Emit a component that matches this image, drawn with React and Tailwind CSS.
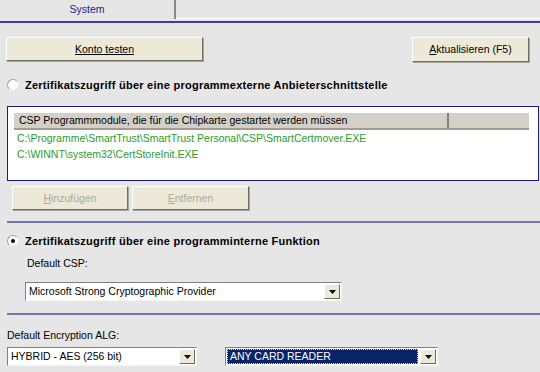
import React from "react";

function Button({ children, className = "", disabled = false }) {
  return (
    <div
      className={`flex items-center justify-center bg-[#ece9d8] border border-t-white border-l-white border-r-[#716f64] border-b-[#716f64] shadow-[1px_1px_0_#a8a69a] ${
        disabled ? "text-[#aca899]" : "text-black"
      } ${className}`}
    >
      {children}
    </div>
  );
}

function Radio({ checked }) {
  return (
    <div className="w-[12px] h-[12px] rounded-full bg-white border border-t-[#a0a0a0] border-l-[#a0a0a0] border-r-[#e8e8e8] border-b-[#e8e8e8] flex items-center justify-center">
      {checked && <div className="w-[4px] h-[4px] rounded-full bg-black" />}
    </div>
  );
}

function Combo({ text, className = "", selected = false }) {
  return (
    <div
      className={`flex items-stretch h-[19px] border border-t-[#808080] border-l-[#808080] border-r-[#f4f4f0] border-b-[#f4f4f0] bg-white ${className}`}
    >
      <div className="flex-1 flex items-center p-[1px] min-w-0">
        <div
          className={`flex-1 h-full flex items-center pl-[2px] ${
            selected
              ? "bg-[#0a246a] text-white border border-dotted border-[#f0e080]"
              : "text-black"
          }`}
        >
          {text}
        </div>
      </div>
      <div className="w-[16px] m-[1px] flex items-center justify-center bg-[#ece9d8] border border-t-white border-l-white border-r-[#716f64] border-b-[#716f64]">
        <svg width="7" height="4" viewBox="0 0 7 4">
          <path d="M0 0h7L3.5 4z" fill="#000" />
        </svg>
      </div>
    </div>
  );
}

export default function App() {
  return (
    <div
      className="w-[540px] h-[372px] bg-[#e6e6e6] overflow-hidden text-[10.5px] leading-none"
      style={{ fontFamily: '"Liberation Sans", Arial, sans-serif' }}
    >
      {/* tab strip */}
      <div className="flex h-[19px]">
        <div className="w-[174px] flex items-center justify-center text-[#1c1c8c]">
          System
        </div>
        <div className="w-[2px] bg-[#8a8a80]" />
        <div className="flex-1 border-b border-white" />
      </div>
      <div className="mt-[2px] h-[2px] bg-[#3c3ca4]" />

      <div className="flex mt-[14px] pl-[6px] pr-[11px] items-start">
        <Button className="w-[197px] h-[24px]">
          <span className="underline">Konto testen</span>
        </Button>
        <Button className="ml-auto w-[117px] h-[25px]">
          <span>
            <span className="underline">A</span>ktualisieren (F5)
          </span>
        </Button>
      </div>

      <div className="flex items-center gap-[6px] mt-[16px] pl-[7px] h-[14px]">
        <Radio />
        <span className="font-bold text-[11px] tracking-[0.25px]">
          Zertifikatszugriff über eine programmexterne Anbieterschnittstelle
        </span>
      </div>

      <div className="ml-[7px] mr-[1px] mt-[14px] h-[75px] bg-white border border-[#1a1a78] pt-[6px] pl-[6px]">
        <div className="flex w-[515px] h-[17px] bg-[#d4d0c8] border-b-2 border-[#a09c94]">
          <div className="w-[435px] flex items-center pl-[5px] border-r-2 border-r-[#808080]">
            CSP Programmmodule, die für die Chipkarte gestartet werden müssen
          </div>
          <div className="flex-1" />
        </div>
        <div className="pl-[3px] text-[#2c9c2c]">
          <div className="h-[16px] flex items-center">
            C:\Programme\SmartTrust\SmartTrust Personal\CSP\SmartCertmover.EXE
          </div>
          <div className="h-[16px] flex items-center">
            C:\WINNT\system32\CertStoreInit.EXE
          </div>
        </div>
      </div>

      <div className="flex gap-[4px] mt-[5px] pl-[12px]">
        <Button disabled className="w-[116px] h-[24px]">
          <span>
            <span className="underline">H</span>inzufügen
          </span>
        </Button>
        <Button disabled className="w-[117px] h-[24px]">
          <span>
            <span className="underline">E</span>ntfernen
          </span>
        </Button>
      </div>

      <div className="ml-[7px] mt-[11px] h-[2px] bg-[#7676ac]" />

      <div className="flex items-center gap-[6px] mt-[11px] pl-[7px] h-[14px]">
        <Radio checked />
        <span className="font-bold text-[11px] tracking-[0.25px]">
          Zertifikatszugriff über eine programminterne Funktion
        </span>
      </div>

      <div className="mt-[8px] pl-[27px] h-[14px] flex items-center">
        Default CSP:
      </div>

      <Combo
        text="Microsoft Strong Cryptographic Provider"
        className="ml-[25px] mt-[12px] w-[317px]"
      />

      <div className="ml-[7px] mt-[12px] h-[2px] bg-[#7676ac]" />

      <div className="mt-[13px] pl-[7px] h-[14px] flex items-center">
        Default Encryption ALG:
      </div>

      <div className="flex mt-[5px] pl-[7px]">
        <Combo text="HYBRID - AES (256 bit)" className="w-[190px]" />
        <Combo
          text="ANY CARD READER"
          selected
          className="ml-[28px] w-[213px]"
        />
      </div>
    </div>
  );
}
